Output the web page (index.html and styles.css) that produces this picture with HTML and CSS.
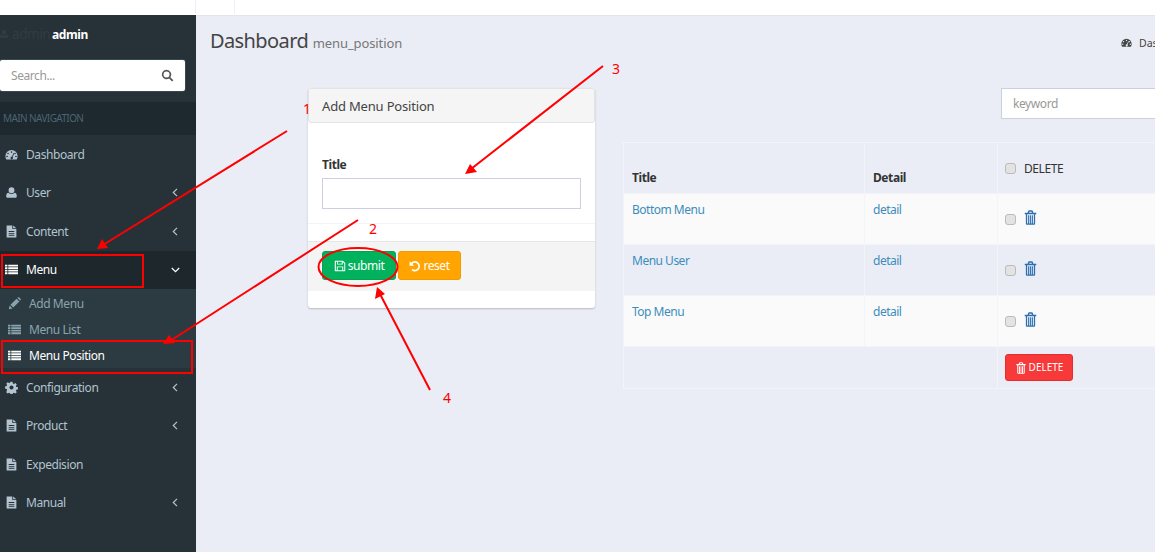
FILE: index.html
```html
<!DOCTYPE html>
<html lang="en">
<head>
<meta charset="utf-8">
<title>Dashboard menu_position</title>
<link rel="stylesheet" href="styles.css">
</head>
<body>
<svg class="sprite" width="0" height="0" aria-hidden="true">
  <symbol id="i-dash" viewBox="0 0 16 16"><path fill-rule="evenodd" d="M8 2.5a7.5 7.5 0 0 0-7.5 7.5c0 1.4.4 2.7 1 3.8.1.2.4.4.6.4h11.8c.2 0 .5-.2.6-.4.6-1.100 1-2.400 1-3.800A7.500 7.500 0 0 0 8 2.500zM8 4a1 1 0 1 1 0 2 1 1 0 0 1 0-2zM3.700 5.800a1 1 0 1 1 0 2 1 1 0 0 1 0-2zM12.300 5.800a1 1 0 1 1 0 2 1 1 0 0 1 0-2zM2.500 9.500a1 1 0 1 1 0 2 1 1 0 0 1 0-2zM13.500 9.500a1 1 0 1 1 0 2 1 1 0 0 1 0-2zM10.500 6.300l.8.4-1.900 4.400a1.500 1.500 0 1 1-.9-.4z"/></symbol>
  <symbol id="i-user" viewBox="0 0 16 16"><path d="M8 1.500a3.600 3.600 0 0 1 3.600 3.700A3.600 3.600 0 0 1 8 8.900a3.600 3.600 0 0 1-3.600-3.700A3.600 3.600 0 0 1 8 1.500zM4.200 8.300C5.200 9.300 6.500 9.800 8 9.800s2.800-.5 3.800-1.500c1.700.2 2.700 1.700 2.700 4.200 0 1.200-.8 2-2 2h-9c-1.200 0-2-.8-2-2 0-2.500 1-4 2.700-4.200z"/></symbol>
  <symbol id="i-file" viewBox="0 0 16 16"><path fill-rule="evenodd" d="M2 .5h7v4.500h5v10c0 .300-.2.500-.5.500h-11a.5.500 0 0 1-.5-.5zM4.500 7.500v1h7v-1zM4.500 9.800v1h7v-1zM4.500 12.100v1h7v-1z"/><path d="M10 .6l3.900 3.400H10z"/></symbol>
  <symbol id="i-list" viewBox="0 0 16 16"><path d="M0 2h3v2.400H0zM4 2h12v2.400H4zM0 5.100h3v2.400H0zM4 5.100h12v2.400H4zM0 8.200h3v2.400H0zM4 8.200h12v2.400H4zM0 11.300h3v2.400H0zM4 11.300h12v2.400H4z"/></symbol>
  <symbol id="i-cog" viewBox="0 0 16 16"><path fill-rule="evenodd" d="M6.700 1h2.600l.4 2 1.300.6 1.700-1.100 1.800 1.800-1.100 1.700.6 1.300 2 .4v2.600l-2 .4-.6 1.300 1.100 1.700-1.800 1.800-1.700-1.100-1.300.6-.4 2H6.700l-.4-2-1.300-.6-1.700 1.100-1.800-1.800L2.600 11 2 9.700 0 9.300V6.700l2-.4.600-1.300L1.500 3.300l1.800-1.800L5 2.600l1.300-.6zM8 5.500a2.500 2.500 0 1 0 0 5 2.500 2.500 0 0 0 0-5z"/></symbol>
  <symbol id="i-pencil" viewBox="0 0 16 16"><path d="M1 15l1-4.500 3.500 3.500zM3 9.500l7.500-7.500 3.500 3.500L6.500 13zM11.500 1l1-.7c.4-.2.8-.2 1.100.1l2 2c.3.3.3.7.1 1.100l-.7 1z"/></symbol>
  <symbol id="i-search" viewBox="0 0 16 16"><path fill-rule="evenodd" d="M6.800 1a5.800 5.800 0 0 1 4.700 9.200l3.700 3.700-1.500 1.500-3.700-3.700A5.800 5.800 0 1 1 6.800 1zm0 2.100a3.700 3.700 0 1 0 0 7.400 3.700 3.700 0 0 0 0-7.400z"/></symbol>
  <symbol id="i-save" viewBox="0 0 16 16"><path fill-rule="evenodd" d="M1.500 1h10.500l3 3v10.500c0 .3-.2.500-.5.500h-13a.5.500 0 0 1-.5-.5v-13c0-.3.200-.5.500-.5zM2.500 2.300v11.400h1.200V8.500h8.600v5.200h1.400V4.600l-2-2V6H4V2.300zM5 2.300V5h5.300V2.300zM5 9.700v4h6v-4z"/></symbol>
  <symbol id="i-undo" viewBox="0 0 16 16"><path d="M.8 1.500l2 2A6.900 6.900 0 1 1 3.300 13.600l1.600-1.800A4.500 4.500 0 1 0 4.600 5.200L6.800 7.500h-6z"/></symbol>
  <symbol id="i-trash" viewBox="0 0 14 16"><path fill-rule="evenodd" d="M4.300 1.500C4.500.7 5 .3 5.600.3h2.800c.6 0 1.100.4 1.300 1.200l.4 1.300h3.100v1.600H12v9.700c0 1-.6 1.700-1.400 1.700H3.400c-.8 0-1.400-.7-1.400-1.700V4.400H.8V2.800h3.100zM5.500 2.800h3l-.3-1H5.800zM3.400 4.400v10.100h1V5.500h1.300v9h.8V5.500h1v9h.8V5.500h1.300v9h1V4.400z"/></symbol>
  <symbol id="i-left" viewBox="0 0 6 9"><path d="M5 .8L1.300 4.500 5 8.200" fill="none" stroke="currentColor" stroke-width="1.200"/></symbol>
  <symbol id="i-down" viewBox="0 0 9 6"><path d="M.8 1l3.700 3.700L8.200 1" fill="none" stroke="currentColor" stroke-width="1.200"/></symbol>
</svg>

<header class="topbar">
  <span class="topbar-cell topbar-toggle"></span>
  <span class="topbar-cell topbar-link"></span>
</header>

<div class="layout">
  <aside class="sidebar">
    <div class="user-panel">
      <span class="user-avatar"><svg class="ic ic-avatar"><use href="#i-user"/></svg>admin</span>
      <strong class="user-name">admin</strong>
    </div>
    <form class="sidebar-search">
      <input class="search-input" type="text" placeholder="Search...">
      <svg class="ic ic-search"><use href="#i-search"/></svg>
    </form>
    <div class="nav-header">MAIN NAVIGATION</div>
    <nav class="nav">
      <a class="nav-item"><svg class="ic"><use href="#i-dash"/></svg><span class="nav-label">Dashboard</span></a>
      <a class="nav-item"><svg class="ic"><use href="#i-user"/></svg><span class="nav-label">User</span><svg class="chev"><use href="#i-left"/></svg></a>
      <a class="nav-item"><svg class="ic"><use href="#i-file"/></svg><span class="nav-label">Content</span><svg class="chev"><use href="#i-left"/></svg></a>
      <a class="nav-item nav-active"><svg class="ic"><use href="#i-list"/></svg><span class="nav-label">Menu</span><svg class="chev-down"><use href="#i-down"/></svg></a>
      <div class="subnav">
        <a class="sub-item"><svg class="ic"><use href="#i-pencil"/></svg>Add Menu</a>
        <a class="sub-item"><svg class="ic"><use href="#i-list"/></svg>Menu List</a>
        <a class="sub-item sub-active"><svg class="ic"><use href="#i-list"/></svg>Menu Position</a>
      </div>
      <a class="nav-item"><svg class="ic"><use href="#i-cog"/></svg><span class="nav-label">Configuration</span><svg class="chev"><use href="#i-left"/></svg></a>
      <a class="nav-item"><svg class="ic"><use href="#i-file"/></svg><span class="nav-label">Product</span><svg class="chev"><use href="#i-left"/></svg></a>
      <a class="nav-item"><svg class="ic"><use href="#i-file"/></svg><span class="nav-label">Expedision</span></a>
      <a class="nav-item"><svg class="ic"><use href="#i-file"/></svg><span class="nav-label">Manual</span><svg class="chev"><use href="#i-left"/></svg></a>
    </nav>
  </aside>

  <main class="main">
    <div class="main-inner">
      <div class="content-header">
        <h1 class="page-title">Dashboard <small class="page-sub">menu_position</small></h1>
        <div class="breadcrumb"><svg class="ic"><use href="#i-dash"/></svg>Dashboard</div>
      </div>
      <div class="content">
        <section class="card">
          <h2 class="card-title">Add Menu Position</h2>
          <div class="card-body">
            <label class="field-label" for="title">Title</label>
            <input class="field-input" id="title" type="text">
          </div>
          <div class="card-footer">
            <button class="btn btn-submit" type="button"><svg class="ic"><use href="#i-save"/></svg>submit</button>
            <button class="btn btn-reset" type="button"><svg class="ic"><use href="#i-undo"/></svg>reset</button>
          </div>
        </section>
        <section class="list">
          <div class="list-tools"><input class="keyword" type="text" placeholder="keyword"></div>
          <table class="table">
            <thead>
              <tr><th class="col-title">Title</th><th class="col-detail">Detail</th><th class="col-del"><label class="del-head"><input class="check" type="checkbox">DELETE</label></th></tr>
            </thead>
            <tbody>
              <tr class="odd"><td><a>Bottom Menu</a></td><td><a>detail</a></td><td class="del-cell"><input class="check" type="checkbox"><svg class="trash"><use href="#i-trash"/></svg></td></tr>
              <tr><td><a>Menu User</a></td><td><a>detail</a></td><td class="del-cell"><input class="check" type="checkbox"><svg class="trash"><use href="#i-trash"/></svg></td></tr>
              <tr class="odd"><td><a>Top Menu</a></td><td><a>detail</a></td><td class="del-cell"><input class="check" type="checkbox"><svg class="trash"><use href="#i-trash"/></svg></td></tr>
              <tr class="foot"><td colspan="2"></td><td class="foot-cell"><button class="btn btn-delete" type="button"><svg class="ic"><use href="#i-trash"/></svg>DELETE</button></td></tr>
            </tbody>
          </table>
        </section>
      </div>
    </div>
  </main>
</div>

<svg class="marks" viewBox="0 0 1155 552" aria-hidden="true">
  <g fill="none" stroke="#f00" stroke-width="2">
    <path d="M287 131L103 245M358 220L170 341M603 66L471 169M430 390L380 294"/>
    <rect x="2" y="255" width="141" height="32"/>
    <rect x="2" y="341" width="190" height="32"/>
    <ellipse cx="358" cy="267" rx="39.500" ry="19"/>
  </g>
  <path fill="#f00" d="M97 249l5-10 6 9zM163 344l6-9 6 8zM465 174l5-10 7 8zM377 287l8 7-10 5z"/>
</svg>
<span class="mark mark-1">1</span>
<span class="mark mark-2">2</span>
<span class="mark mark-3">3</span>
<span class="mark mark-4">4</span>
</body>
</html>
```
FILE: styles.css
```css
* { box-sizing: border-box; }
html, body { height: 100%; }
body {
  margin: 0;
  position: relative;
  overflow: hidden;
  background: #eaedf5;
  font-family: "Noto Sans", "Open Sans", sans-serif;
  font-size: 12px;
  letter-spacing: -.42px;
  color: #333;
}
input, button { letter-spacing: inherit; }
.sprite { position: absolute; }
.ic { width: 13px; height: 13px; fill: currentColor; flex: none; }

.topbar { display: flex; height: 15px; padding: 0 0 1px 195px; background: #fff; }
.topbar-cell { border-left: 1px solid #eef0f4; }
.topbar-toggle { width: 39px; }
.topbar-link { width: 39px; }

.layout { display: flex; height: 537px; }
.sidebar { width: 196px; flex: none; background: #263238; color: #b3c3cf; }
.user-panel { display: flex; align-items: center; height: 38px; }
.user-avatar { display: flex; align-items: center; gap: 3px; width: 52px; font-size: 13.500px; color: #313c42; }
.ic-avatar { width: 10px; height: 12px; margin-left: -1px; }
.user-name { color: #fff; font-weight: 700; }

.sidebar-search { position: relative; margin: 6px 10px 0 -1px; height: 33px; border: 1px solid #374850; border-radius: 3px; }
.search-input { display: block; width: 100%; height: 31px; padding: 0 11px; border: 0; border-radius: 2px; background: #fff; font: inherit; outline: 0; }
.search-input::placeholder { color: #999; }
.ic-search { position: absolute; right: 11px; top: 9px; color: #555; }

.nav-header { height: 33px; margin-top: 10px; padding: 0 3px; line-height: 33px; background: #1e282f; color: #4b646f; font-size: 10px; letter-spacing: -.6px; }

.nav-item { display: flex; align-items: center; height: 38.500px; padding: 0 18px 0 5px; }
.nav-item .ic { margin-right: 8px; width: 13px; }
.nav-label { flex: 1; }
.chev { width: 6px; height: 9px; color: #b3c3cf; }
.chev-down { width: 9px; height: 6px; margin-right: -2px; color: #fff; }
.nav-active { background: #1e282c; color: #fff; }

.subnav { padding-top: 1px; background: #2c3b41; }
.sub-item { display: flex; align-items: center; height: 26px; padding-left: 8px; color: #8aa4af; }
.sub-item .ic { margin-right: 8px; }
.sub-active { color: #fff; }

.main { flex: 1; min-width: 0; overflow: hidden; border-top: 1px solid #e3e5ec; }
.main-inner { width: 1100px; }
.content-header { display: flex; align-items: baseline; height: 55px; padding: 11px 0 0 14px; justify-content: space-between; }
.page-title { margin: 0; font-size: 20px; font-weight: 400; letter-spacing: -.6px; color: #444; }
.page-sub { font-size: 13px; letter-spacing: -.1px; color: #777; }
.breadcrumb { display: flex; align-items: center; gap: 7px; width: 175px; font-size: 10.500px; letter-spacing: 0; color: #444; }
.breadcrumb .ic { width: 11px; height: 11px; }

.content { display: flex; align-items: flex-start; padding: 17px 0 0 112px; }
.card { width: 287px; height: 220px; background: #fff; border-radius: 3px; box-shadow: 0 1px 2px rgba(0,0,0,.22); }
.card-title { margin: 0; height: 35px; padding: 0 13px; line-height: 34px; background: #f5f5f5; border: 1px solid #e2e3e6; border-radius: 3px; font-size: 13px; font-weight: 400; letter-spacing: -.18px; color: #444; }
.card-body { height: 101px; padding: 33px 14px 0; border-bottom: 1px solid #f3f4f7; }
.field-label { display: block; margin-bottom: 5px; font-weight: 700; color: #333; }
.field-input { display: block; width: 259px; height: 31px; border: 1px solid #ccd0e0; background: #fff; }
.card-footer { display: flex; gap: 2px; height: 50px; margin-top: 17px; padding: 9px 14px; background: #f4f4f4; border-top: 1px solid #e5e6ea; }
.btn { display: flex; align-items: center; justify-content: center; gap: 2px; height: 29px; border: 1px solid transparent; border-radius: 3px; color: #fff; font: inherit; padding: 0; }
.btn .ic { width: 12px; height: 12px; }
.btn-submit { width: 74px; background: #00b25b; border-color: #0a9f57; }
.btn-reset { width: 63px; background: #ffa400; border-color: #f09b00; }
.btn-delete { width: 68px; height: 27px; background: #f73939; border-color: #e62c2c; font-size: 10px; letter-spacing: 0; }

.list { margin-left: 28px; width: 560px; }
.list-tools { height: 54px; padding-left: 378px; }
.keyword { display: block; width: 180px; height: 31px; padding: 0 11px; border: 1px solid #ccd0e0; background: #fff; font: inherit; }
.keyword::placeholder { color: #999; }

.table { width: 100%; table-layout: fixed; border-collapse: collapse; }
.table th, .table td { padding: 7px 8px; border: 1px solid #f3f4f7; text-align: left; vertical-align: top; line-height: 17px; }
.table th { height: 51px; vertical-align: bottom; color: #333; }
.col-title { width: 241px; }
.col-detail { width: 133px; }
.table .col-del { vertical-align: top; font-weight: 400; padding-left: 7px; }
.del-head { display: flex; align-items: center; gap: 8px; height: 36px; }
.check { appearance: none; width: 11px; height: 11px; margin: 0; border: 1px solid #bbb; border-radius: 3px; background: #e3e3e3; flex: none; }
.table td { height: 51px; }
.table a { color: #3c8dbc; letter-spacing: -.5px; }
.odd td { background: #fafafa; }
.del-cell { white-space: nowrap; }
.table .del-cell { padding: 16px 8px 0 7px; }
.del-cell .check { margin-right: 8px; vertical-align: -1px; }
.trash { width: 13px; height: 15px; fill: #2c6fb0; vertical-align: -1px; }
.table .foot td { height: 42px; padding: 7px 8px 7px; }
.table .foot .foot-cell { padding-left: 7px; }

.marks { position: absolute; left: 0; top: 0; width: 1155px; height: 552px; pointer-events: none; }
.mark { position: absolute; color: #f00; font-size: 14px; line-height: 16px; }
.mark-1 { left: 303px; top: 101px; }
.mark-2 { left: 369px; top: 221px; }
.mark-3 { left: 612px; top: 61px; }
.mark-4 { left: 443px; top: 390px; }
```
